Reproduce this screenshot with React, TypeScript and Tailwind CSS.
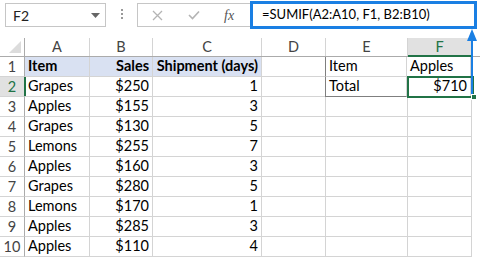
import React from 'react';

const COLS = ['A', 'B', 'C', 'D', 'E', 'F'];
const COL_W = ['w-[65px]', 'w-[63px]', 'w-[109px]', 'w-[64px]', 'w-[82px]', 'w-[64px]'];

const ROWS: (string | null)[][] = [
  ['Item', 'Sales', 'Shipment (days)', null, 'Item', 'Apples'],
  ['Grapes', '$250', '1', null, 'Total', '$710'],
  ['Apples', '$155', '3', null, null, null],
  ['Grapes', '$130', '5', null, null, null],
  ['Lemons', '$255', '7', null, null, null],
  ['Apples', '$160', '3', null, null, null],
  ['Grapes', '$280', '5', null, null, null],
  ['Lemons', '$170', '1', null, null, null],
  ['Apples', '$285', '3', null, null, null],
  ['Apples', '$110', '4', null, null, null],
];

const Cell = ({ r, c, v }: { r: number; c: number; v: string | null }) => {
  const header = r === 0 && c < 3;
  const right = c === 1 || c === 2 || (c === 5 && r === 1);
  const boxLeft = c === 4 && r < 2;
  const boxBottom = c === 4 && r === 1;
  return (
    <div
      className={`${COL_W[c]} h-[20px] shrink-0 border-r border-b border-[#d4d4d4] flex items-center px-[3px] leading-none ${
        header ? 'bg-[#d9e1f2] font-bold' : ''
      } ${right ? 'justify-end' : ''} ${boxLeft ? 'border-l border-l-[#7f7f7f] -ml-px' : ''} ${
        boxBottom ? 'border-b-[#7f7f7f]' : ''
      }`}
    >
      {v}
    </div>
  );
};

export default function App() {
  return (
    <div className="relative w-[480px] h-[258px] bg-white overflow-hidden text-black" style={{ fontFamily: 'Lato, "Liberation Sans", sans-serif' }}>
      {/* --- Formula bar --- */}
      <div className="h-[38px] flex items-start relative">
        <div className="mt-[3px] ml-[5px] w-[101px] h-[24px] border border-[#c6c6c6] flex items-center justify-between pl-[7px] pr-[5px] text-[14px] text-[#222]">
          <span>F2</span>
          <svg width="9" height="5" viewBox="0 0 9 5"><path d="M0 0h9L4.5 5z" fill="#666" /></svg>
        </div>
        <div className="w-[31px] mt-[9px] flex flex-col items-center gap-[2px]">
          <div className="w-[2px] h-[2px] bg-[#999]" />
          <div className="w-[2px] h-[2px] bg-[#999]" />
          <div className="w-[2px] h-[2px] bg-[#999]" />
        </div>
        <div className="mt-[3px] w-[113px] h-[24px] border border-[#c6c6c6] border-r-0 flex items-center">
          <svg className="ml-[14px]" width="11" height="11" viewBox="0 0 11 11"><path d="M1 1l9 9M10 1l-9 9" stroke="#b4b4b4" strokeWidth="1.3" /></svg>
          <svg className="ml-[25px]" width="12" height="10" viewBox="0 0 12 10"><path d="M1 5l3.5 3.5L11 1.5" stroke="#b4b4b4" strokeWidth="1.6" fill="none" /></svg>
          <span className="ml-[24px] text-[14px] italic text-[#555]" style={{ fontFamily: '"Liberation Serif", serif' }}>fx</span>
        </div>
        <div className="mt-[1px] w-[227px] h-[28px] border-[3px] border-[#1a7fe3] flex items-center pl-[9px] text-[13px]">
          =SUMIF(A2:A10, F1, B2:B10)
        </div>
      </div>

      {/* --- Grid --- */}
      <div className="relative text-[14.5px]">
        <div className="flex h-[19px] border-b border-[#ababab] text-[#444]">
          <div className="w-[25px] shrink-0 border-r border-[#ababab] relative">
            <svg className="absolute right-[3px] bottom-[3px]" width="12" height="12" viewBox="0 0 12 12"><path d="M12 0v12H0z" fill="#dcdcdc" /></svg>
          </div>
          {COLS.map((c, i) => (
            <div
              key={c}
              className={`${COL_W[i]} shrink-0 border-r border-[#d4d4d4] flex items-center justify-center ${
                c === 'F' ? 'bg-[#e1e1e1] text-[#217346] border-b-2 border-b-[#217346] -mb-px' : ''
              }`}
            >
              {c}
            </div>
          ))}
        </div>
        {ROWS.map((row, r) => (
          <div key={r} className="flex">
            <div
              className={`w-[25px] h-[20px] shrink-0 border-b border-[#d4d4d4] flex items-center justify-center text-[#444] ${
                r === 1 ? 'bg-[#e1e1e1] text-[#217346] border-r-2 border-r-[#217346] w-[26px] -mr-px' : 'border-r border-r-[#ababab]'
              }`}
            >
              {r + 1}
            </div>
            {row.map((v, c) => (
              <Cell key={c} r={r} c={c} v={v} />
            ))}
          </div>
        ))}

        {/* Selected cell F2 */}
        <div className="absolute left-[407px] top-[38px] w-[67px] h-[22px] border-2 border-[#217346]" />
        <div className="absolute left-[471px] top-[56px] w-[6px] h-[6px] bg-[#217346] border border-white" />

        {/* Arrow from F2 to formula bar */}
        <div className="absolute left-[471px] top-[-6px] w-[2px] h-[62px] bg-[#1a7fe3]" />
      </div>
      <svg className="absolute left-[467px] top-[29px]" width="10" height="12" viewBox="0 0 10 12"><path d="M5 0L10 12H0z" fill="#1a7fe3" /></svg>
    </div>
  );
}
